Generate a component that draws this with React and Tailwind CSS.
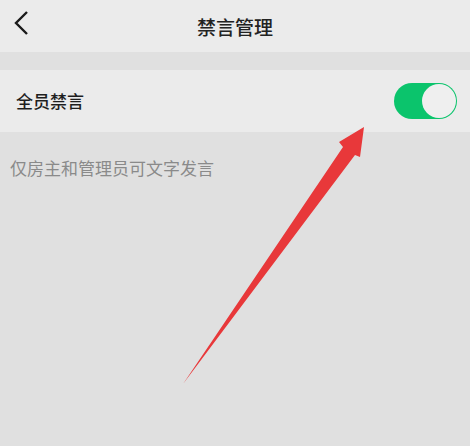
import React from "react";

const Toggle = () => {
  return (
    <div className="w-[63px] h-[36px] rounded-full bg-[#0bc46c] flex items-center justify-end p-[1px]">
      <div className="w-[34px] h-[34px] rounded-full bg-[#efefef]" />
    </div>
  );
};

const Arrow = () => {
  return (
    <svg
      className="absolute left-0 top-0 pointer-events-none"
      width="470"
      height="446"
      viewBox="0 0 470 446"
    >
      <polygon
        points="183,384 343,147 339,142 364,127 360,157 355,155"
        fill="#e8383a"
      />
    </svg>
  );
};

export default function App() {
  return (
    <div
      className="relative w-[470px] h-[446px] bg-[#e0e0e0] overflow-hidden"
      style={{ fontFamily: '"Noto Sans CJK SC", "Noto Sans", sans-serif' }}
    >
      {/* header */}
      <div className="h-[52px] bg-[#ebebeb] flex items-center relative">
        <svg className="absolute left-[13px] top-[10px]" width="18" height="26" viewBox="0 0 18 26">
          <path d="M14 2 L3 13 L14 24" fill="none" stroke="#1a1a1a" strokeWidth="2.4" />
        </svg>
        <div className="w-full text-center text-[19px] font-medium text-[#222] leading-none">禁言管理</div>
      </div>

      <div className="h-[18px]" />

      <div className="h-[62px] bg-[#ebebeb] flex items-center justify-between pl-[16px] pr-[13px]">
        <span className="text-[17px] font-medium text-[#1e1e1e]">全员禁言</span>
        <Toggle />
      </div>

      <div className="pl-[10px] pt-[27px] text-[17px] text-[#8a8a8a] leading-none">
        仅房主和管理员可文字发言
      </div>

      <Arrow />
    </div>
  );
}
